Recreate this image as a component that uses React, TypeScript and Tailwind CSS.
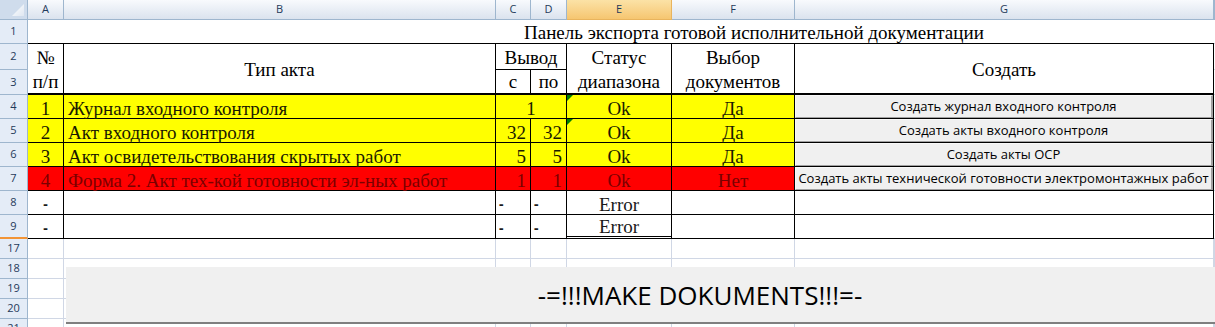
import React from "react";

const SERIF = "font-[family-name:Liberation_Serif,Times_New_Roman,serif] text-[19px]";
const SANS = "font-[family-name:Open_Sans,Liberation_Sans,sans-serif]";

function RowHead({ n, last }: { n: string; last?: boolean }) {
  return (
    <div
      className={`flex items-center justify-center border-r border-r-[#9eb6ce] bg-[#e4ecf7] text-[11px] text-[#1f3a5a] ${SANS} ${
        last ? "border-b-2 border-b-[#f29436]" : "border-b border-b-[#9eb6ce]"
      }`}
    >
      {n}
    </div>
  );
}

function ColHead({ l, sel }: { l: string; sel?: boolean }) {
  return (
    <div
      className={`flex items-center justify-center border-r border-b text-[11px] text-[#1f3a5a] ${SANS} ${
        sel
          ? "border-[#e9b45d] bg-linear-to-b from-[#fbe2a6] to-[#f6c670]"
          : "border-[#9eb6ce] bg-linear-to-b from-[#f8fafd] to-[#dbe3ee]"
      }`}
    >
      {l}
    </div>
  );
}

function Tri() {
  return (
    <svg className="absolute left-0 top-0" width="6" height="6" viewBox="0 0 6 6">
      <polygon points="0,0 6,0 0,6" fill="#008000" />
    </svg>
  );
}

type Row = {
  n: string;
  no: string;
  name: string;
  c?: string;
  d?: string;
  merged?: string;
  sel: string;
  btn: string;
  red?: boolean;
  tri?: boolean;
};

const rows: Row[] = [
  { n: "4", no: "1", name: "Журнал входного контроля", merged: "1", sel: "Да", btn: "Создать журнал входного контроля", tri: true },
  { n: "5", no: "2", name: "Акт входного контроля", c: "32", d: "32", sel: "Да", btn: "Создать акты входного контроля", tri: true },
  { n: "6", no: "3", name: "Акт освидетельствования скрытых работ", c: "5", d: "5", sel: "Да", btn: "Создать акты ОСР" },
  { n: "7", no: "4", name: "Форма 2. Акт тех-кой готовности эл-ных работ", c: "1", d: "1", sel: "Нет", btn: "Создать акты технической готовности электромонтажных работ", red: true },
];

function DataRow({ r }: { r: Row }) {
  const bg = r.red ? "bg-[#ff0000] text-[#7a0000]" : "bg-[#ffff00] text-[#1a1a00]";
  const cell = `border-r border-b border-black ${bg} ${SERIF} flex items-end leading-[19px] whitespace-nowrap`;
  return (
    <>
      <RowHead n={r.n} />
      <div className={`${cell} justify-center`}>{r.no}</div>
      <div className={`${cell} pl-[4px]`}>{r.name}</div>
      {r.merged ? (
        <div className={`${cell} col-span-2 justify-center`}>{r.merged}</div>
      ) : (
        <>
          <div className={`${cell} justify-end pr-[4px]`}>{r.c}</div>
          <div className={`${cell} justify-end pr-[4px]`}>{r.d}</div>
        </>
      )}
      <div className={`${cell} relative justify-center`}>
        {r.tri && <Tri />}
        Ok
      </div>
      <div className={`${cell} justify-center`}>{r.sel}</div>
      <div className="border-r border-b border-black bg-white">
        <div
          className={`flex h-full w-full items-center justify-center border-l border-t border-l-[#f8f8f8] border-t-[#f8f8f8] border-r-2 border-b border-r-[#a0a0a0] border-b-[#a0a0a0] bg-[#f0f0f0] text-[13px] leading-none text-black whitespace-nowrap ${SANS}`}
        >
          {r.btn}
        </div>
      </div>
      <div className="border-b border-[#d0d7e5]" />
    </>
  );
}

function EmptyRow({ n, last }: { n: string; last?: boolean }) {
  const cell = `border-r border-b border-black bg-white ${SERIF} flex items-end leading-[19px] text-[#1a1a1a]`;
  const dash = `text-[14px] font-bold leading-[20px] ${SANS}`;
  return (
    <>
      <RowHead n={n} last={last} />
      <div className={`${cell} justify-center`}>
        <span className={dash}>-</span>
      </div>
      <div className={cell} />
      <div className={`${cell} pl-[3px]`}>
        <span className={dash}>-</span>
      </div>
      <div className={`${cell} pl-[3px]`}>
        <span className={dash}>-</span>
      </div>
      <div className={`${cell} justify-center ${last ? "border-b-[3px] border-double" : ""}`}>Error</div>
      <div className={cell} />
      <div className={cell} />
      <div className="border-b border-[#d0d7e5]" />
    </>
  );
}

function GridRow({ n }: { n: string }) {
  const g = "border-r border-b border-[#d0d7e5] bg-white";
  return (
    <>
      <RowHead n={n} />
      <div className={g} />
      <div className={g} />
      <div className={g} />
      <div className={g} />
      <div className={g} />
      <div className={g} />
      <div className={g} />
      <div className={g} />
    </>
  );
}

export default function App() {
  const hc = `border-r border-black bg-white ${SERIF} text-black`;
  return (
    <div className="relative h-[327px] w-[1215px] overflow-hidden bg-white">
      <div className="grid grid-cols-[28px_36px_432px_35px_36px_105px_123px_419px_1fr] grid-rows-[20px_24px_26px_25px_24px_24px_24px_24px_24px_24px_20px_20px_20px_20px_20px]">
        {/* column header row */}
        <div className="relative border-r border-b border-[#9eb6ce] bg-[#cfdcec]">
          <svg className="absolute right-[3px] bottom-[3px]" width="12" height="12" viewBox="0 0 12 12">
            <defs>
              <linearGradient id="cg" x1="0" y1="0" x2="1" y2="1">
                <stop offset="0" stopColor="#ffffff" />
                <stop offset="1" stopColor="#dfe7f1" />
              </linearGradient>
            </defs>
            <polygon points="12,0 12,12 0,12" fill="url(#cg)" />
          </svg>
        </div>
        <ColHead l="A" />
        <ColHead l="B" />
        <ColHead l="C" />
        <ColHead l="D" />
        <ColHead l="E" sel />
        <ColHead l="F" />
        <ColHead l="G" />
        <ColHead l="" />

        {/* row 1 */}
        <RowHead n="1" />
        <div className={`col-span-7 flex items-end border-b border-black pl-[496px] leading-[21px] whitespace-nowrap text-black ${SERIF}`}>
          Панель экспорта готовой исполнительной документации
        </div>
        <div className="border-b border-[#d0d7e5]" />

        {/* row 2 */}
        <RowHead n="2" />
        <div className={`${hc} row-span-2 flex flex-col items-center justify-center border-b-2 pt-[2px] leading-6`}>
          <span>№</span>
          <span>п/п</span>
        </div>
        <div className={`${hc} row-span-2 flex items-center justify-center border-b-2 pt-[2px] leading-6`}>Тип акта</div>
        <div className={`${hc} col-span-2 flex items-end justify-center border-b leading-[23px]`}>Вывод</div>
        <div className={`${hc} row-span-2 flex flex-col items-center justify-center border-b-2 pt-[2px] leading-6`}>
          <span>Статус</span>
          <span>диапазона</span>
        </div>
        <div className={`${hc} row-span-2 flex flex-col items-center justify-center border-b-2 pt-[2px] leading-6`}>
          <span>Выбор</span>
          <span>документов</span>
        </div>
        <div className={`${hc} row-span-2 flex items-center justify-center border-b-2 pt-[2px] leading-6`}>Создать</div>
        <div className="border-b border-[#d0d7e5]" />

        {/* row 3 */}
        <RowHead n="3" />
        <div className={`${hc} flex items-end justify-center border-b-2 leading-[23px]`}>с</div>
        <div className={`${hc} flex items-end justify-center border-b-2 leading-[23px]`}>по</div>
        <div className="border-b border-[#d0d7e5]" />

        {rows.map((r) => (
          <DataRow key={r.n} r={r} />
        ))}
        <EmptyRow n="8" />
        <EmptyRow n="9" last />

        <GridRow n="17" />
        <GridRow n="18" />
        <GridRow n="19" />
        <GridRow n="20" />
        <GridRow n="21" />
      </div>

      <div
        className={`absolute left-[66px] top-[267px] flex h-[57px] w-[1268px] items-center justify-center border-b-2 border-[#7f7f7f] bg-[#f0f0f0] text-[26px] leading-none text-black ${SANS}`}
      >
        -=!!!MAKE DOKUMENTS!!!=-
      </div>
    </div>
  );
}
